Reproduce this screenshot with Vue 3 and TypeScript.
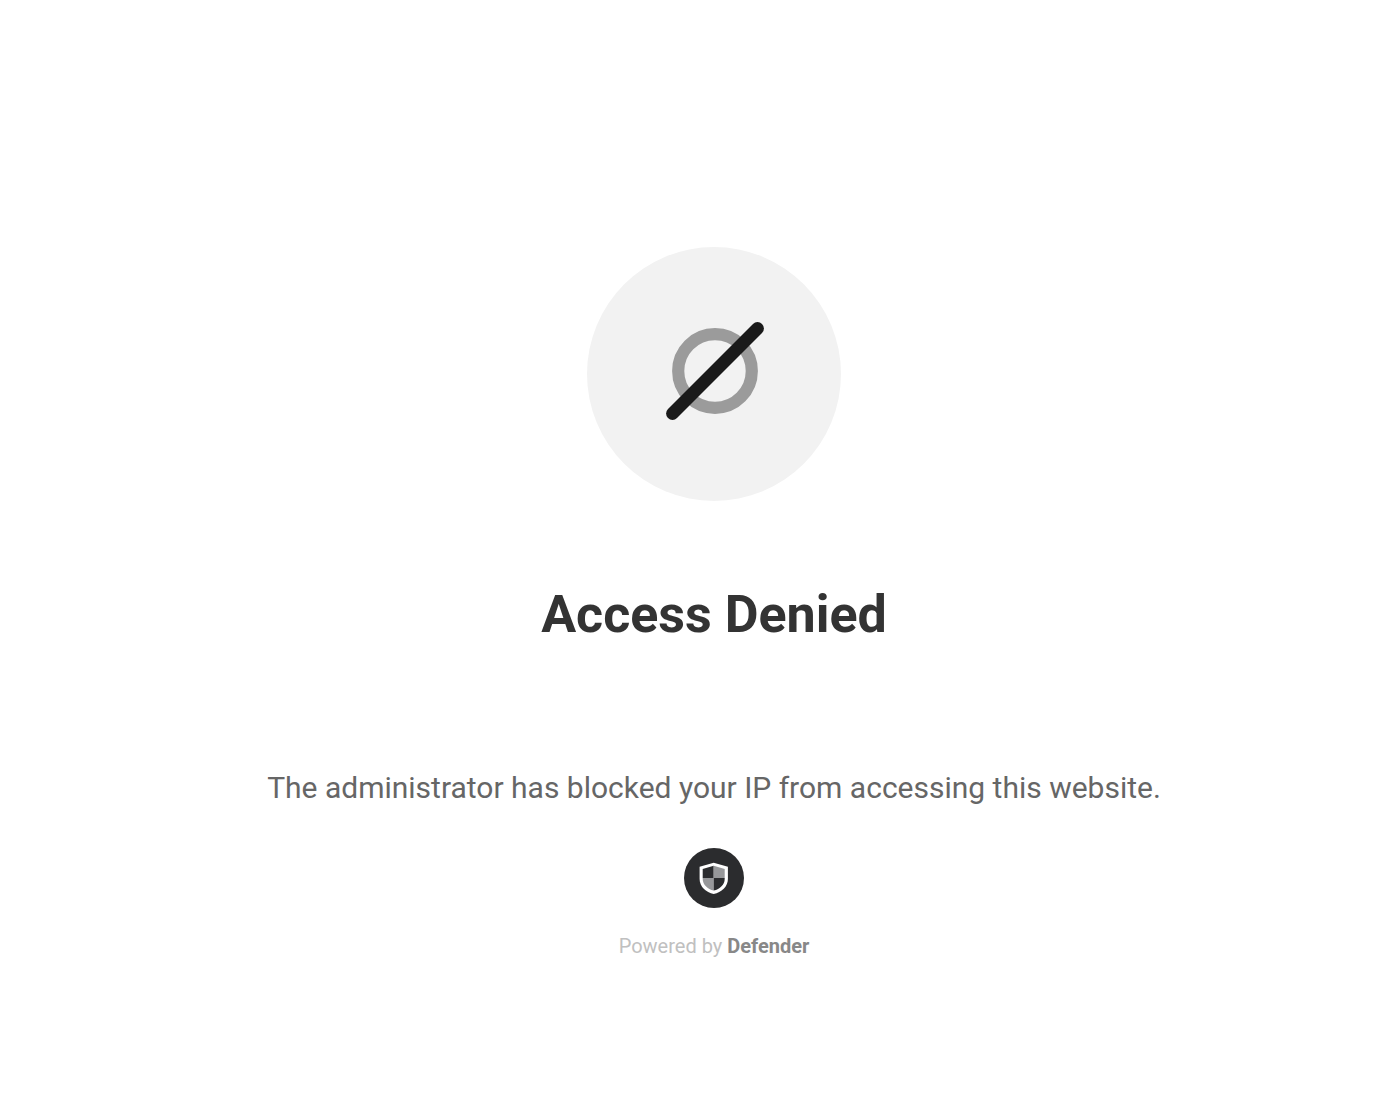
<script setup lang="ts">
const title = 'Access Denied'
const message = 'The administrator has blocked your IP from accessing this website.'
</script>

<template>
  <main class="page">
    <svg class="denied" viewBox="0 0 254 254" aria-hidden="true">
      <circle cx="127" cy="127" r="127" fill="#f2f2f2" />
      <circle cx="128" cy="124" r="36.8" fill="none" stroke="#9b9b9b" stroke-width="12.2" />
      <path d="M85.5 166.5 170.5 81.5" stroke="#1a1a1a" stroke-width="12.8" stroke-linecap="round" />
    </svg>
    <h1 class="title">{{ title }}</h1>
    <p class="message">{{ message }}</p>
    <footer class="powered">
      <svg class="badge" viewBox="0 0 60 60" aria-hidden="true">
        <circle cx="30" cy="30" r="30" fill="#2b2c2e" />
        <path d="M29.7 14.7 43.9 18.7V31C43.9 38.7 37.5 44.3 29.7 46 21.9 44.3 15.6 38.7 15.6 31V18.7Z" fill="#fff" />
        <path d="M29.7 17.8V30H18.7V21Z" fill="#2b2c2e" />
        <path d="M29.7 17.8V30H40.7V21Z" fill="#97989a" />
        <path d="M18.7 30H29.7V42.6C23.5 41.2 18.7 36.6 18.7 31Z" fill="#97989a" />
        <path d="M40.7 30H29.7V42.6C35.9 41.2 40.7 36.6 40.7 31Z" fill="#2b2c2e" />
      </svg>
      <p class="credit">Powered by <strong>Defender</strong></p>
    </footer>
  </main>
</template>

<style>
body {
  margin: 0;
  background: #fff;
}
</style>

<style scoped>
.page {
  display: flex;
  flex-direction: column;
  align-items: center;
  padding: 247px 0 0 50px;
  font-family: Roboto, sans-serif;
  text-align: center;
}

.denied {
  width: 254px;
  height: 254px;
}

.title {
  margin: 84px 0 0;
  color: #333;
  font-size: 52px;
  font-weight: 700;
  line-height: 60px;
}

.message {
  margin: 123px 0 0;
  color: #666;
  font-size: 30px;
  line-height: 40px;
}

.powered {
  display: flex;
  flex-direction: column;
  align-items: center;
  margin-top: 40px;
}

.badge {
  width: 60px;
  height: 60px;
}

.credit {
  margin: 23px 0 0;
  color: #c0c0c0;
  font-size: 20px;
  line-height: 30px;
}

.credit strong {
  color: #888;
  font-weight: 700;
}
</style>
